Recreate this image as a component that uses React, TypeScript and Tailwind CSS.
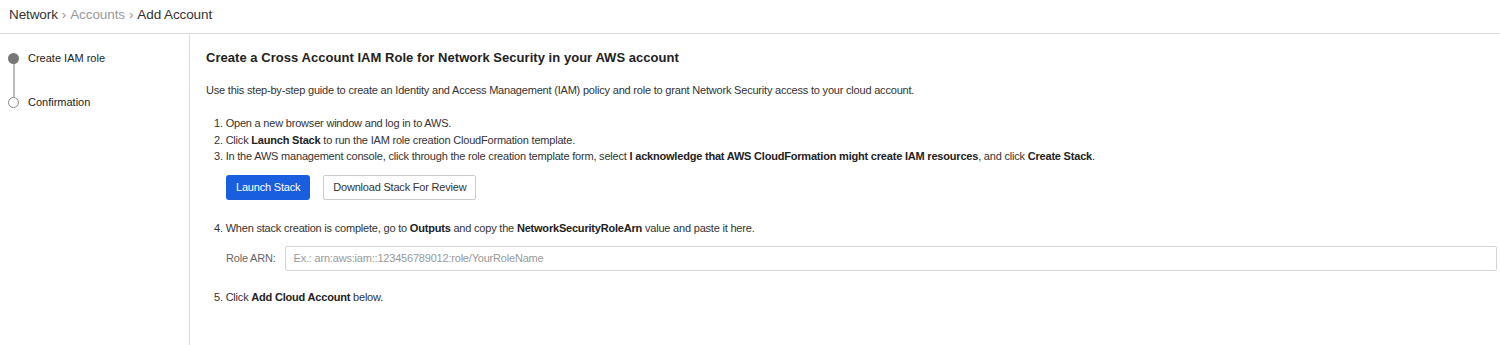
const App = () => {
  return (
    <div className="h-[345px] w-[1500px] overflow-hidden bg-white font-['Liberation_Sans',Arial,sans-serif] text-[#333]">
      <div className="flex h-[34px] items-center border-b border-[#ddd] pb-[2px] pl-[9px] text-[13.5px] tracking-[-0.1px]">
        <span className="text-[#333]">Network</span>
        <span className="px-[4px] text-[#999]">›</span>
        <span className="text-[#999]">Accounts</span>
        <span className="px-[4px] text-[#999]">›</span>
        <span className="text-[#333]">Add Account</span>
      </div>

      <div className="flex h-[311px]">
        <aside className="w-[190px] shrink-0 border-r border-[#ddd] pt-[19px] pl-[8px]">
          <div className="relative">
            <div className="absolute top-[6px] left-[4.5px] h-[40px] w-[2px] bg-[#bbb]" />
            <div className="relative flex h-[11px] items-center gap-[9px]">
              <span className="size-[11px] rounded-full bg-[#777]" />
              <span className="text-[11px] text-[#222]">Create IAM role</span>
            </div>
            <div className="relative mt-[33px] flex h-[11px] items-center gap-[9px]">
              <span className="size-[11px] rounded-full border border-[#888] bg-white" />
              <span className="text-[11px] text-[#222]">Confirmation</span>
            </div>
          </div>
        </aside>

        <main className="flex-1 pt-[15px] pl-[16px] pr-[3px] text-[11px] tracking-[-0.2px]">
          <h1 className="text-[13px] leading-[18px] font-bold tracking-[0.04px] text-[#222]">
            Create a Cross Account IAM Role for Network Security in your AWS account
          </h1>
          <p className="mt-[15px] leading-[16px]">
            Use this step-by-step guide to create an Identity and Access Management (IAM) policy and role to grant Network Security access to your cloud account.
          </p>

          <ol className="mt-[17px] pl-[8px] leading-[16.5px]">
            <li>1. Open a new browser window and log in to AWS.</li>
            <li>2. Click <b className="text-[#222]">Launch Stack</b> to run the IAM role creation CloudFormation template.</li>
            <li>
              3. In the AWS management console, click through the role creation template form, select{" "}
              <b className="text-[#222]">I acknowledge that AWS CloudFormation might create IAM resources</b>, and click{" "}
              <b className="text-[#222]">Create Stack</b>.
            </li>
          </ol>

          <div className="mt-[10px] flex gap-[13px] pl-[20px]">
            <button className="h-[25px] rounded-[3px] bg-[#1a5ee0] px-[10px] text-white">
              Launch Stack
            </button>
            <button className="h-[25px] rounded-[2px] border border-[#ccc] bg-white px-[9px] text-[#333]">
              Download Stack For Review
            </button>
          </div>

          <p className="mt-[20px] pl-[8px] leading-[16px]">
            4. When stack creation is complete, go to <b className="text-[#222]">Outputs</b> and copy the{" "}
            <b className="text-[#222]">NetworkSecurityRoleArn</b> value and paste it here.
          </p>

          <div className="mt-[10px] flex items-center gap-[9px] pl-[20px]">
            <label className="text-[#666]">Role ARN:</label>
            <input
              className="h-[25px] flex-1 rounded-[2px] border border-[#d4d4d4] px-[8px] tracking-[-0.2px] placeholder:text-[#999]"
              placeholder="Ex.: arn:aws:iam::123456789012:role/YourRoleName"
            />
          </div>

          <p className="mt-[18px] pl-[8px] leading-[16px]">
            5. Click <b className="text-[#222]">Add Cloud Account</b> below.
          </p>
        </main>
      </div>
    </div>
  )
}

export default App
